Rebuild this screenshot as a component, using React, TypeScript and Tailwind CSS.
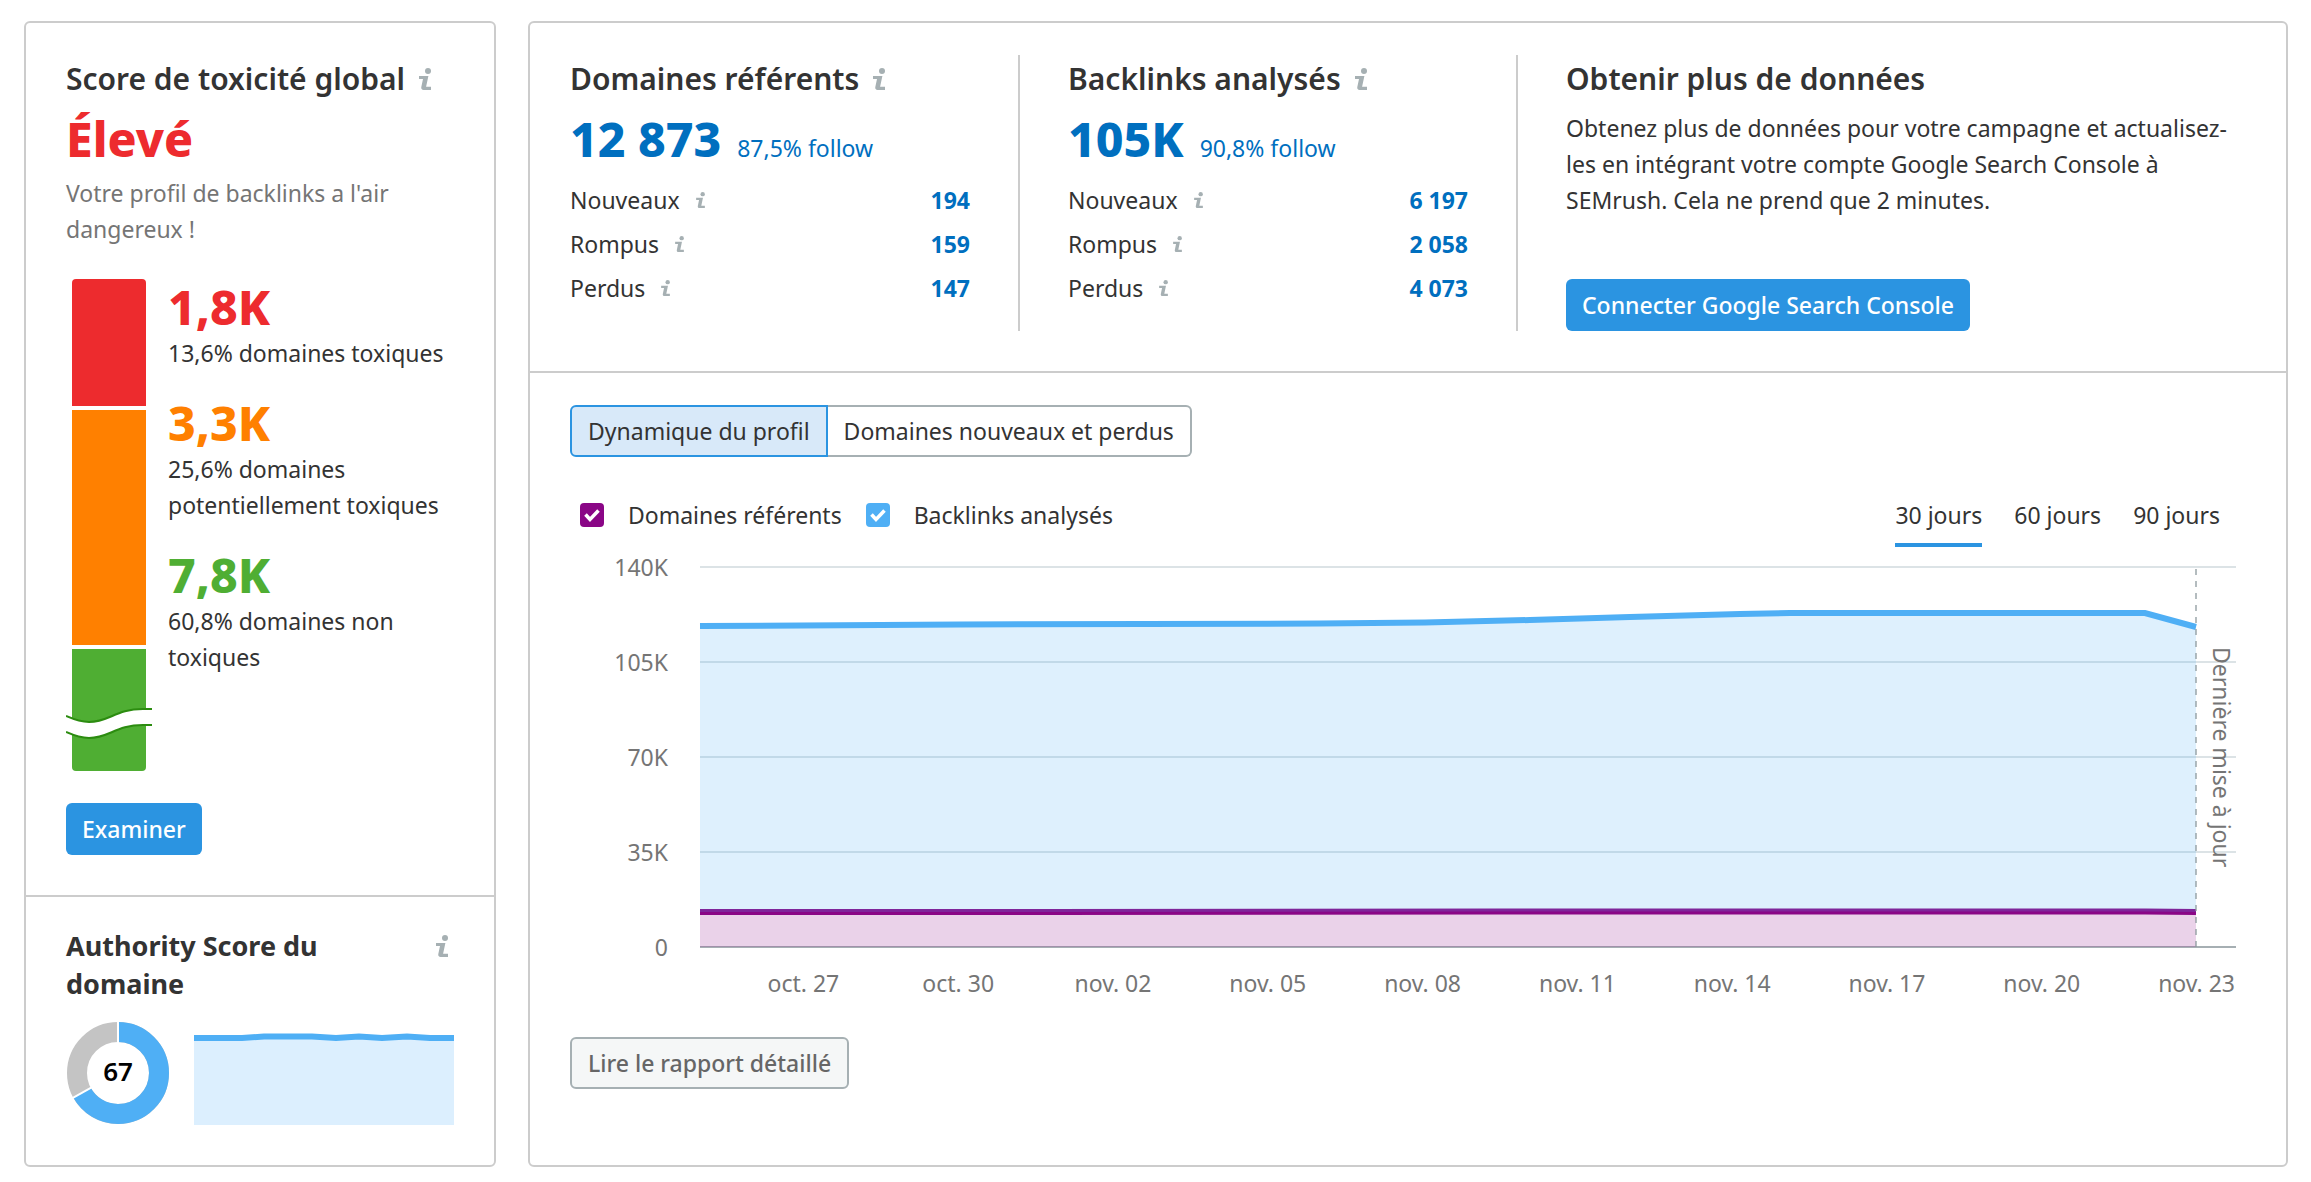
import { useState } from "react";
import type { ReactNode } from "react";

function InfoIcon({ small = false }: { small?: boolean }) {
  return (
    <svg
      viewBox="0 0 12 22"
      className={small ? "h-4 w-[9px] shrink-0 fill-[#a6b0b3]" : "h-[22px] w-3 shrink-0 fill-[#a6b0b3]"}
      aria-hidden="true"
    >
      <circle cx="9" cy="3" r="3" />
      <path d="M0 8h9.400l-2.300 10.800h4.900V22H4.600c-1.700 0-2.700-1.200-2.300-2.900L4 11H0z" />
    </svg>
  );
}

function InfoButton({ label, small = false }: { label: string; small?: boolean }) {
  return (
    <button type="button" aria-label={label} className="flex shrink-0 items-center">
      <InfoIcon small={small} />
    </button>
  );
}

function Title({ children }: { children: ReactNode }) {
  return <h2 className="text-[30px] leading-[48px] font-semibold whitespace-nowrap">{children}</h2>;
}

const levels = [
  { value: "1,8K", text: "13,6% domaines toxiques", color: "text-[#ed2b2e]" },
  { value: "3,3K", text: "25,6% domaines potentiellement toxiques", color: "text-[#ff8000]" },
  { value: "7,8K", text: "60,8% domaines non toxiques", color: "text-[#4fae33]" },
];

function ToxicityBar() {
  return (
    <div className="relative h-[492px] w-[86px] shrink-0 px-1.5">
      <div className="flex h-full flex-col gap-1 overflow-hidden rounded">
        <div className="h-[127px] bg-[#ed2b2e]" />
        <div className="h-[235px] bg-[#ff8000]" />
        <div className="flex-1 bg-[#4fae33]" />
      </div>
      <svg viewBox="0 0 86 34" className="absolute bottom-[30px] left-0 h-[34px] w-[86px]" fill="none">
        <path d="M0 9C8 12.500 15 15 23 15C43 15 50 2 77 2H86V18H77C50 18 43 31 23 31C15 31 8 28.500 0 25z" fill="#fff" />
        <path
          d="M0 9C8 12.500 15 15 23 15C43 15 50 2 77 2H86M0 25C8 28.500 15 31 23 31C43 31 50 18 77 18H86"
          stroke="#2c8c10"
          strokeWidth="2"
        />
      </svg>
    </div>
  );
}

function Donut({ value }: { value: number }) {
  const r = 41;
  const c = 2 * Math.PI * r;
  return (
    <svg viewBox="0 0 104 104" className="h-[104px] w-[104px] shrink-0" role="img" aria-label={`Score ${value}`}>
      <g fill="none" strokeWidth="20" transform="rotate(-90 52 52)">
        <circle cx="52" cy="52" r={r} stroke="#c4c4c4" />
        <circle cx="52" cy="52" r={r} stroke="#4faff5" strokeDasharray={`${(c * value) / 100} ${c}`} />
      </g>
      <g stroke="#fff" strokeWidth="2">
        <path d="M52 0V24" />
        <path d="M52 0V24" transform={`rotate(${value * 3.6} 52 52)`} />
      </g>
      <text x="52" y="60" textAnchor="middle" className="fill-black text-[26px] font-semibold">
        {value}
      </text>
    </svg>
  );
}

function Sparkline() {
  return (
    <svg viewBox="0 0 260 104" preserveAspectRatio="none" className="h-[104px] min-w-0 flex-1">
      <path d="M0 17H260V104H0z" fill="#dceffe" />
      <path
        d="M0 17H48L70 15.500H118L142 17L165 15.500L188 17L213 15.500L236 17H260"
        fill="none"
        stroke="#4faff5"
        strokeWidth="6"
      />
    </svg>
  );
}

type Metric = { title: string; total: string; follow: string; rows: [string, string][] };

const metrics: Metric[] = [
  {
    title: "Domaines référents",
    total: "12 873",
    follow: "87,5% follow",
    rows: [["Nouveaux", "194"], ["Rompus", "159"], ["Perdus", "147"]],
  },
  {
    title: "Backlinks analysés",
    total: "105K",
    follow: "90,8% follow",
    rows: [["Nouveaux", "6 197"], ["Rompus", "2 058"], ["Perdus", "4 073"]],
  },
];

function MetricColumn({ title, total, follow, rows }: Metric) {
  return (
    <section className="mr-12 w-[450px] shrink-0 border-r-2 border-[#ccc] pr-12">
      <div className="flex items-center gap-3.5">
        <Title>{title}</Title>
        <InfoButton label={`À propos : ${title}`} />
      </div>
      <div className="flex h-[72px] items-baseline gap-4 text-[#006fbf]">
        <a href="#total" className="text-[48px] leading-[72px] font-extrabold whitespace-nowrap">{total}</a>
        <a href="#follow" className="whitespace-nowrap">{follow}</a>
      </div>
      <dl className="pt-[3px]">
        {rows.map(([name, value]) => (
          <div key={name} className="flex h-11 items-center justify-between">
            <dt className="flex items-center gap-4">
              {name}
              <InfoButton label={`À propos : ${name}`} small />
            </dt>
            <dd className="font-bold text-[#006fbf]">
              <a href="#detail">{value}</a>
            </dd>
          </div>
        ))}
      </dl>
    </section>
  );
}

function PrimaryButton({ children }: { children: ReactNode }) {
  return (
    <button type="button" className="h-[52px] self-start rounded-md bg-[#2b94e1] px-4 font-medium whitespace-nowrap text-white">
      {children}
    </button>
  );
}

function LegendCheck({ label, box, checked, onChange }: { label: string; box: string; checked: boolean; onChange: () => void }) {
  return (
    <label className="flex items-center gap-6 whitespace-nowrap">
      <span className="grid">
        <input
          type="checkbox"
          checked={checked}
          onChange={onChange}
          className={`col-start-1 row-start-1 h-6 w-6 appearance-none rounded ${box}`}
        />
        <svg viewBox="0 0 24 24" className="pointer-events-none col-start-1 row-start-1 h-6 w-6" fill="none">
          {checked && <path d="M5.500 11.500L10 16.500L18.500 7.500" stroke="#fff" strokeWidth="3.500" />}
        </svg>
      </span>
      {label}
    </label>
  );
}

const backlinks = "M0 59L260 57.500L620 56.500L725 55.500L830 53L930 50L1040 47L1090 46H1445L1496 60";
const domains = "M0 345H350L800 344.500H1445L1496 345";

function Plot({ showDomains, showBacklinks }: { showDomains: boolean; showBacklinks: boolean }) {
  return (
    <div className="relative">
      <svg viewBox="0 0 1536 380" preserveAspectRatio="none" className="block h-[380px] w-full overflow-visible" fill="none">
        <path d="M0 0H1536M0 95H1536M0 190H1536M0 285H1536" stroke="#dce3e6" strokeWidth="2" />
        <path d="M0 380H1536" stroke="#a6afb3" strokeWidth="2" />
        {showDomains && (
          <>
            <path d={`${domains}V380H0z`} fill="#8a0686" fillOpacity="0.18" />
            <path d={domains} stroke="#8a0686" strokeWidth="6" />
          </>
        )}
        {showBacklinks && (
          <>
            <path d={`${backlinks}V345L1445 344.500H800L350 345H0z`} fill="#4faff5" fillOpacity="0.19" />
            <path d={backlinks} stroke="#4faff5" strokeWidth="6" />
          </>
        )}
        <path d="M1496 2V380" stroke="#8c989d" strokeOpacity="0.65" strokeWidth="2" strokeDasharray="6 6" />
      </svg>
      <span className="absolute top-20 right-[-4px] leading-9 whitespace-nowrap text-[#757575] [writing-mode:vertical-rl]">
        Dernière mise à jour
      </span>
    </div>
  );
}

const yTicks = ["140K", "105K", "70K", "35K", "0"];
const xTicks = ["oct. 27", "oct. 30", "nov. 02", "nov. 05", "nov. 08", "nov. 11", "nov. 14", "nov. 17", "nov. 20", "nov. 23"];
const periods = ["30 jours", "60 jours", "90 jours"];

export default function App() {
  const [showDomains, setShowDomains] = useState(true);
  const [showBacklinks, setShowBacklinks] = useState(true);
  const [period, setPeriod] = useState(periods[0]);

  return (
    <main className="flex gap-8 bg-white pt-[21px] pr-[23px] pb-[15px] pl-6 font-['Noto_Sans',sans-serif] text-[23px] leading-9 text-[#333]">
      <aside className="w-[472px] shrink-0 rounded-md border-2 border-[#ccc]">
        <section className="flex flex-col px-10 pt-8 pb-10">
          <div className="flex items-center gap-3.5">
            <Title>Score de toxicité global</Title>
            <InfoButton label="À propos du score de toxicité" />
          </div>
          <p className="text-[48px] leading-[72px] font-extrabold text-[#ed2b2e]">Élevé</p>
          <p className="text-[#757575]">Votre profil de backlinks a l'air dangereux !</p>
          <div className="mt-8 mb-8 flex gap-4">
            <ToxicityBar />
            <ul className="flex min-w-0 flex-1 flex-col gap-6">
              {levels.map((level) => (
                <li key={level.value}>
                  <p className={`text-[48px] leading-[56px] font-extrabold ${level.color}`}>{level.value}</p>
                  <p>{level.text}</p>
                </li>
              ))}
            </ul>
          </div>
          <PrimaryButton>Examiner</PrimaryButton>
        </section>
        <section className="border-t-2 border-[#ccc] px-10 pt-[30px] pb-10">
          <div className="flex items-start justify-between">
            <h2 className="w-[300px] text-[27px] leading-[38px] font-bold">Authority Score du domaine</h2>
            <div className="flex h-[38px] items-center pr-1.5">
              <InfoButton label="À propos de l'Authority Score" />
            </div>
          </div>
          <div className="mt-[18px] flex gap-6">
            <Donut value={67} />
            <Sparkline />
          </div>
        </section>
      </aside>

      <div className="min-w-0 flex-1 rounded-md border-2 border-[#ccc]">
        <div className="flex border-b-2 border-[#ccc] px-10 pt-8 pb-10">
          {metrics.map((metric) => (
            <MetricColumn key={metric.title} {...metric} />
          ))}
          <section className="flex h-[276px] min-w-0 flex-1 flex-col">
            <Title>Obtenir plus de données</Title>
            <p className="mt-[7px] mb-auto">
              Obtenez plus de données pour votre campagne et actualisez-les en intégrant votre compte Google Search Console à
              SEMrush. Cela ne prend que 2 minutes.
            </p>
            <PrimaryButton>Connecter Google Search Console</PrimaryButton>
          </section>
        </div>

        <section className="flex flex-col pt-8 pr-[50px] pb-10 pl-10">
          <div className="flex h-[52px] self-start whitespace-nowrap">
            <button type="button" className="rounded-l-md border-2 border-[#2b94e1] bg-[#d8e9f9] px-4">
              Dynamique du profil
            </button>
            <button type="button" className="rounded-r-md border-2 border-l-0 border-[#a6b0b3] bg-white px-4">
              Domaines nouveaux et perdus
            </button>
          </div>

          <div className="mt-[26px] flex h-16 items-center justify-between pr-4 pl-2.5">
            <div className="flex gap-6">
              <LegendCheck label="Domaines référents" box="bg-[#8a0686]" checked={showDomains} onChange={() => setShowDomains(!showDomains)} />
              <LegendCheck label="Backlinks analysés" box="bg-[#4faff5]" checked={showBacklinks} onChange={() => setShowBacklinks(!showBacklinks)} />
            </div>
            <div className="flex gap-8" role="tablist">
              {periods.map((p) => (
                <button
                  key={p}
                  type="button"
                  role="tab"
                  aria-selected={p === period}
                  onClick={() => setPeriod(p)}
                  className={`h-16 border-y-4 border-t-transparent whitespace-nowrap ${p === period ? "border-b-[#2b94e1]" : "border-b-transparent"}`}
                >
                  {p}
                </button>
              ))}
            </div>
          </div>

          <div className="mt-5 flex gap-8 text-[#757575]">
            <div className="-my-[18px] flex h-[416px] w-[98px] shrink-0 flex-col justify-between text-right">
              {yTicks.map((t) => (
                <span key={t}>{t}</span>
              ))}
            </div>
            <div className="min-w-0 flex-1">
              <Plot showDomains={showDomains} showBacklinks={showBacklinks} />
              <div className="mt-[18px] -mr-[38px] ml-[26px] grid grid-cols-10 text-center whitespace-nowrap">
                {xTicks.map((t) => (
                  <span key={t}>{t}</span>
                ))}
              </div>
            </div>
          </div>

          <button
            type="button"
            className="mt-9 h-[52px] self-start rounded-md border-2 border-[#a6b0b3] bg-[#f5f7f7] px-4 font-medium whitespace-nowrap text-[#666]"
          >
            Lire le rapport détaillé
          </button>
        </section>
      </div>
    </main>
  );
}
